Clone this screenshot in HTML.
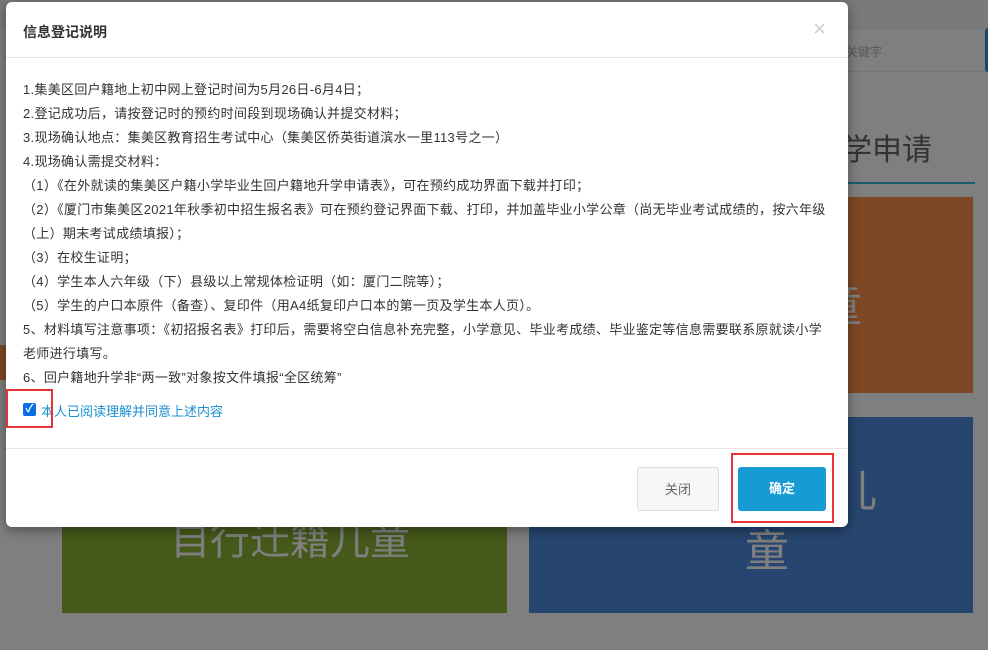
<!DOCTYPE html>
<html><head><meta charset="utf-8"><style>
*{margin:0;padding:0;box-sizing:border-box}
html,body{width:988px;height:650px;overflow:hidden;background:#ffffff}
body{font-family:"Liberation Sans","Noto Sans CJK SC",sans-serif;position:relative}
.a{position:absolute}
.ov{left:0;top:0;width:988px;height:650px;background:#000;opacity:.5}
.modal{left:6px;top:2px;width:842px;height:525px;background:#fff;border-radius:6px;box-shadow:0 3px 12px rgba(0,0,0,.4)}
.hd{height:56px;border-bottom:1px solid #e5e5e5;position:relative}
.hd h4{position:absolute;left:17px;top:20px;font-size:14px;font-weight:bold;color:#333}
.x{position:absolute;right:22px;top:14px;font-size:22px;color:#ccc;font-weight:300}
.bd{position:absolute;left:17px;top:76px;font-size:13px;color:#333;line-height:24px;white-space:nowrap;letter-spacing:0.3px}
.ft{position:absolute;left:0;top:446px;width:842px;border-top:1px solid #e5e5e5}
.btn{position:absolute;top:465px;height:44px;border-radius:3px;font-size:13px;text-align:center;line-height:44px}
</style></head><body>
<div class="a" style="left:0;top:0;width:988px;height:28px;background:#f4f4f4"></div>
<div class="a" style="left:848px;top:28px;width:140px;height:44px;background:#ffffff;border-top:1px solid #eee;border-bottom:1px solid #eee"></div>
<div class="a" style="left:846px;top:43px;font-size:12px;color:#b0b0b0">关键字</div>
<div class="a" style="left:985px;top:28px;width:3px;height:44px;background:#3a8ad8;border-radius:3px 0 0 3px"></div>
<div class="a" style="left:842px;top:125px;font-size:30px;color:#666">学申请</div>
<div class="a" style="left:848px;top:182px;width:127px;height:2px;background:#36b8dd"></div>
<div class="a" style="left:848px;top:197px;width:125px;height:196px;background:#fc904a"></div>
<div class="a" style="left:818px;top:270px;font-size:44px;color:#fff">童</div>
<div class="a" style="left:0;top:345px;width:8px;height:35px;background:#fc904a"></div>
<div class="a" style="left:62px;top:470px;width:445px;height:143px;background:#8ab234"></div>
<div class="a" style="left:170px;top:508px;font-size:40px;color:#fff">自行迁籍儿童</div>
<div class="a" style="left:529px;top:417px;width:444px;height:196px;background:#4e8cde"></div>
<div class="a" style="left:745px;top:462px;font-size:44px;color:#fff;line-height:60px">适龄儿<br>童</div>
<div class="a ov"></div>

<div class="a modal">
<div class="hd"><h4>信息登记说明</h4><span class="x">×</span></div>
<div class="bd">
1.集美区回户籍地上初中网上登记时间为5月26日-6月4日；<br>
2.登记成功后，请按登记时的预约时间段到现场确认并提交材料；<br>
3.现场确认地点：集美区教育招生考试中心（集美区侨英街道滨水一里113号之一）<br>
4.现场确认需提交材料：<br>
（1）《在外就读的集美区户籍小学毕业生回户籍地升学申请表》，可在预约成功界面下载并打印；<br>
（2）《厦门市集美区2021年秋季初中招生报名表》可在预约登记界面下载、打印，并加盖毕业小学公章（尚无毕业考试成绩的，按六年级<br>
（上）期末考试成绩填报）；<br>
（3）在校生证明；<br>
（4）学生本人六年级（下）县级以上常规体检证明（如：厦门二院等）；<br>
（5）学生的户口本原件（备查）、复印件（用A4纸复印户口本的第一页及学生本人页）。<br>
5、材料填写注意事项：《初招报名表》打印后，需要将空白信息补充完整，小学意见、毕业考成绩、毕业鉴定等信息需要联系原就读小学<br>
老师进行填写。<br>
6、回户籍地升学非“两一致”对象按文件填报“全区统筹”
</div>
<div class="a" style="left:17px;top:401px;width:13px;height:13px;background:#0a6ee6;border-radius:2px;color:#fff;font-size:11px;line-height:13px;text-align:center;font-weight:bold">✓</div>
<div class="a" style="left:35px;top:399px;font-size:13px;color:#1a8fd0">本人已阅读理解并同意上述内容</div>
<div class="ft"></div>
<div class="btn" style="left:631px;width:82px;background:#f7f7f7;border:1px solid #ddd;color:#666">关闭</div>
<div class="btn" style="left:732px;width:88px;background:#169bd5;color:#fff;font-weight:bold">确定</div>
</div>
<div class="a" style="left:6px;top:389px;width:47px;height:39px;border:2px solid #e83434"></div>
<div class="a" style="left:731px;top:453px;width:103px;height:70px;border:2px solid #e83434"></div>
</body></html>
